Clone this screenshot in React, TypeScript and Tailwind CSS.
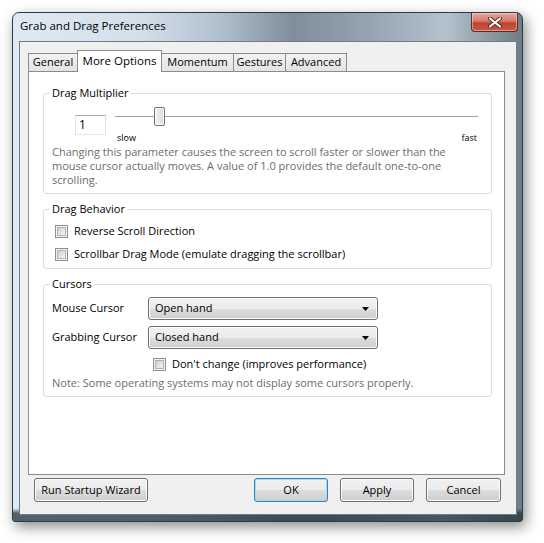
import React from "react";

const Checkbox: React.FC = () => (
  <span className="flex h-[13px] w-[13px] shrink-0 border border-[#8e8f8f] bg-[#f4f4f4] p-px">
    <span className="h-full w-full border border-[#aeb3b9] bg-[linear-gradient(135deg,#cbcfd5,#f6f6f6)]" />
  </span>
);

const Select: React.FC<{ value: string }> = ({ value }) => (
  <div className="flex h-[23px] w-[230px] items-center justify-between rounded-[3px] border border-[#707070] bg-[linear-gradient(#f2f2f2_0%,#ebebeb_50%,#dddddd_50%,#cfcfcf_100%)] pl-[6px] pr-[8px] shadow-[inset_0_0_0_1px_#fcfcfc]">
    <span>{value}</span>
    <svg width="7" height="4" viewBox="0 0 7 4">
      <path d="M0 0h7L3.5 4z" fill="#000" />
    </svg>
  </div>
);

const Button: React.FC<{ label: string; width: string; primary?: boolean }> = ({
  label,
  width,
  primary,
}) => (
  <button
    className={
      primary
        ? `flex h-[24px] ${width} items-center justify-center rounded-[3px] border border-[#3c7fb1] bg-[linear-gradient(#f2f2f2_0%,#ebebeb_50%,#dddddd_50%,#cfcfcf_100%)] shadow-[inset_0_0_0_1px_#9fdcf6] text-black`
        : `flex h-[24px] ${width} items-center justify-center rounded-[3px] border border-[#707070] bg-[linear-gradient(#f2f2f2_0%,#ebebeb_50%,#dddddd_50%,#cfcfcf_100%)] shadow-[inset_0_0_0_1px_#fcfcfc] text-black`
    }
  >
    {label}
  </button>
);

const tabs = [
  { name: "General", w: "w-[50px]" },
  { name: "More Options", w: "w-[85px]", active: true },
  { name: "Momentum", w: "w-[73px]" },
  { name: "Gestures", w: "w-[53px]" },
  { name: "Advanced", w: "w-[62px]" },
];

const App: React.FC = () => {
  return (
    <div className="h-[543px] w-[544px] bg-white pl-[12px] pt-[12px] font-['Open_Sans',sans-serif] text-[11px] text-black">
      <div className="flex h-[510px] w-[511px] flex-col rounded-t-[7px] rounded-b-[3px] border border-[#2c3b45] bg-[linear-gradient(180deg,transparent_97.5%,rgba(35,52,56,0.75)_98.5%),linear-gradient(90deg,#dfe9f3_0%,#d3dfeb_25%,#b3c2cf_40%,#7f8e9a_55%,#95a4b0_70%,#b4c2ce_85%,#6d7d87_100%)] shadow-[3px_5px_14px_rgba(0,0,0,0.45)]">
        {/* title bar */}
        <div className="flex h-[28px] shrink-0 items-start justify-between pl-[7px] pr-[4px]">
          <span className="mt-[5px] text-[11.5px] leading-[16px] text-black">
            Grab and Drag Preferences
          </span>
          <button className="flex h-[19px] w-[47px] items-center justify-center rounded-b-[4px] border border-t-0 border-[#5e2a24] bg-[linear-gradient(#e8a89e_0%,#d77b6d_45%,#c0422f_55%,#c95a44_100%)] shadow-[inset_0_0_0_1px_rgba(255,220,210,0.5)]">
            <svg width="14" height="11" viewBox="0 0 14 11">
              <path d="M2 1.5L12 9.5M12 1.5L2 9.5" stroke="#4a2a26" strokeWidth="4" strokeLinecap="round" />
              <path d="M2 1.5L12 9.5M12 1.5L2 9.5" stroke="#fff" strokeWidth="2.2" strokeLinecap="round" />
            </svg>
          </button>
        </div>

        {/* client area */}
        <div className="flex flex-1 pb-[6px] pl-[6px] pr-[5px]">
          <div className="flex flex-1 flex-col border border-[#6d7c88] bg-[#f0f0f0]">
            {/* tabs */}
            <div className="flex h-[21px] items-end pl-[8px] pr-[11px] pt-0 mt-[8px]">
              {tabs.map((t) =>
                t.active ? (
                  <div
                    key={t.name}
                    className={`relative z-10 -mb-px -ml-px flex h-[22px] ${t.w} items-center justify-center border border-b-0 border-[#898c95] bg-white pb-[2px] text-[11.5px]`}
                  >
                    {t.name}
                  </div>
                ) : (
                  <div
                    key={t.name}
                    className={`-ml-px flex h-[18px] ${t.w} items-center justify-center border border-b-0 border-[#898c95] bg-[linear-gradient(#f2f2f2,#e3e3e3)] first:ml-0`}
                  >
                    {t.name}
                  </div>
                )
              )}
            </div>

            {/* panel */}
            <div className="ml-[8px] mr-[11px] flex h-[404px] flex-col border border-[#898c95] bg-white">
              <fieldset className="ml-[14px] mr-[12px] mt-[13px] rounded-[3px] border border-[#d5dfe5] pb-[6px]">
                <legend className="ml-[6px] px-[2px] leading-[16px]">Drag Multiplier</legend>
                <div className="mt-[6px] flex">
                  <div className="ml-[31px] mt-[8px] flex h-[20px] w-[31px] items-center border border-[#abadb3] border-b-[#e3e9ef] border-l-[#e2e3ea] border-r-[#dbdfe6] pl-[3px] text-[12px]">
                    1
                  </div>
                  <div className="ml-[9px] flex w-[363px] flex-col">
                    <div className="relative h-[19px]">
                      <div className="absolute left-0 right-0 top-[9px] h-px bg-[#a0a0a0]" />
                      <div className="absolute left-[39px] top-0 h-[19px] w-[11px] rounded-[2px] border border-[#707070] bg-[linear-gradient(90deg,#f4f4f4,#dadada)] shadow-[inset_0_0_0_1px_#fff]" />
                    </div>
                    <div className="mt-[6px] flex justify-between pl-[2px] pr-px text-[9px] leading-[12px]">
                      <span>slow</span>
                      <span>fast</span>
                    </div>
                  </div>
                </div>
                <p className="mt-px pl-[8px] leading-[14px] text-[#6d6d6d]">
                  Changing this parameter causes the screen to scroll faster or slower than the
                  <br />
                  mouse cursor actually moves. A value of 1.0 provides the default one-to-one
                  <br />
                  scrolling.
                </p>
              </fieldset>

              <fieldset className="ml-[14px] mr-[12px] mt-[7px] rounded-[3px] border border-[#d5dfe5] pb-[2px]">
                <legend className="ml-[6px] px-[2px] leading-[16px]">Drag Behavior</legend>
                <div className="mt-[3px] flex h-[23px] items-center gap-[6px] pl-[11px]">
                  <Checkbox />
                  <span>Reverse Scroll Direction</span>
                </div>
                <div className="flex h-[23px] items-center gap-[6px] pl-[11px]">
                  <Checkbox />
                  <span>Scrollbar Drag Mode (emulate dragging the scrollbar)</span>
                </div>
              </fieldset>

              <fieldset className="ml-[14px] mr-[12px] mt-[7px] rounded-[3px] border border-[#d5dfe5] pb-[6px]">
                <legend className="ml-[6px] px-[2px] leading-[16px]">Cursors</legend>
                <div className="mt-[5px] flex items-center pl-[8px]">
                  <span className="w-[96px]">Mouse Cursor</span>
                  <Select value="Open hand" />
                </div>
                <div className="mt-[6px] flex items-center pl-[8px]">
                  <span className="w-[96px]">Grabbing Cursor</span>
                  <Select value="Closed hand" />
                </div>
                <div className="mt-[6px] flex h-[18px] items-center gap-[6px] pl-[109px]">
                  <Checkbox />
                  <span>Don't change (improves performance)</span>
                </div>
                <p className="mt-[3px] pl-[8px] leading-[14px] text-[#6d6d6d]">
                  Note: Some operating systems may not display some cursors properly.
                </p>
              </fieldset>
            </div>

            {/* buttons */}
            <div className="mt-[3px] flex items-center justify-between pl-[14px] pr-[15px]">
              <Button label="Run Startup Wizard" width="w-[114px]" />
              <div className="flex gap-[12px]">
                <Button label="OK" width="w-[74px]" primary />
                <Button label="Apply" width="w-[74px]" />
                <Button label="Cancel" width="w-[75px]" />
              </div>
            </div>
          </div>
        </div>
      </div>
    </div>
  );
};

export default App;
